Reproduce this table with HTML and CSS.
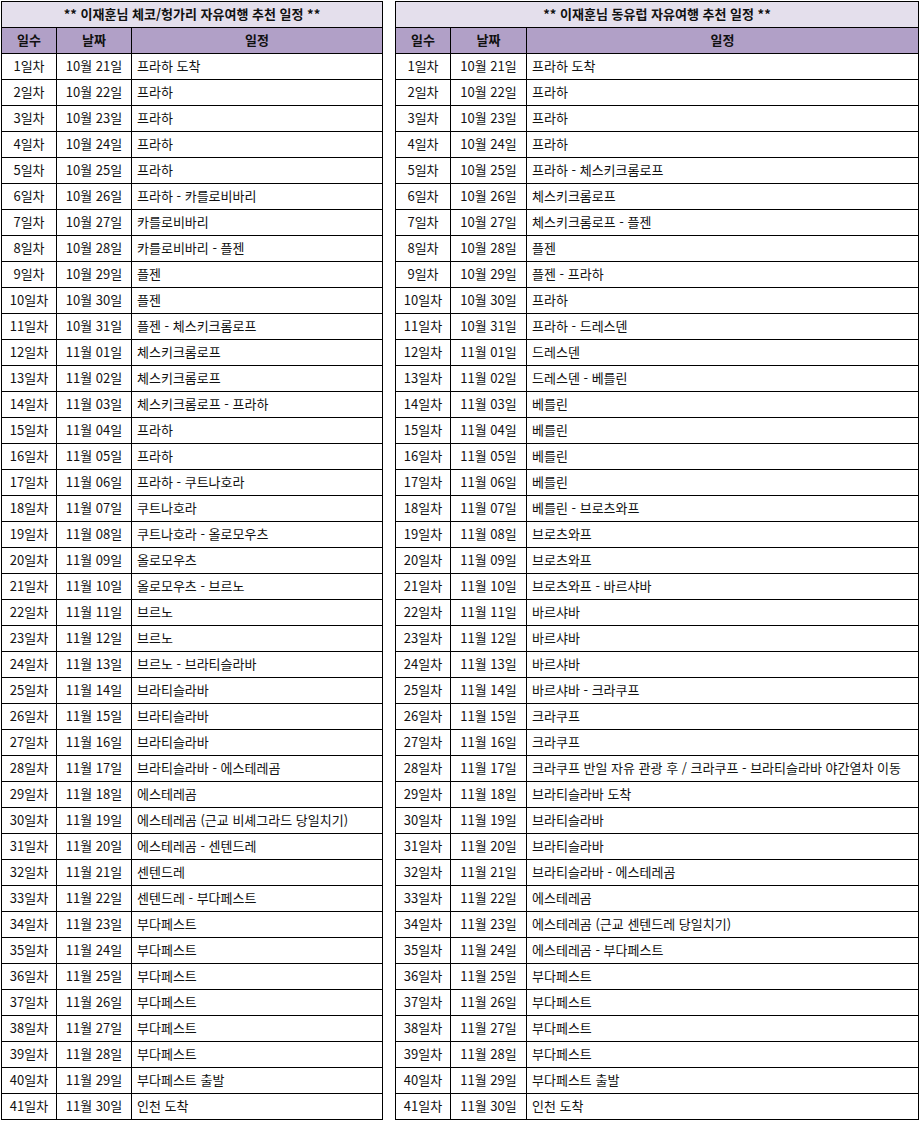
FILE: index.html
```html
<!DOCTYPE html>
<html lang="ko">
<head>
<meta charset="utf-8">
<link rel="stylesheet" href="styles.css">
</head>
<body>
<div class="wrap">
<table class="sched left">
<colgroup><col class="c-day"><col class="c-date-l"><col></colgroup>
<thead>
<tr class="title"><th colspan="3">** 이재훈님 체코/헝가리 자유여행 추천 일정 **</th></tr>
<tr class="head"><th>일수</th><th>날짜</th><th>일정</th></tr>
</thead>
<tbody>
<tr><td>1일차</td><td>10월 21일</td><td>프라하 도착</td></tr>
<tr><td>2일차</td><td>10월 22일</td><td>프라하</td></tr>
<tr><td>3일차</td><td>10월 23일</td><td>프라하</td></tr>
<tr><td>4일차</td><td>10월 24일</td><td>프라하</td></tr>
<tr><td>5일차</td><td>10월 25일</td><td>프라하</td></tr>
<tr><td>6일차</td><td>10월 26일</td><td>프라하 - 카를로비바리</td></tr>
<tr><td>7일차</td><td>10월 27일</td><td>카를로비바리</td></tr>
<tr><td>8일차</td><td>10월 28일</td><td>카를로비바리 - 플젠</td></tr>
<tr><td>9일차</td><td>10월 29일</td><td>플젠</td></tr>
<tr><td>10일차</td><td>10월 30일</td><td>플젠</td></tr>
<tr><td>11일차</td><td>10월 31일</td><td>플젠 - 체스키크롬로프</td></tr>
<tr><td>12일차</td><td>11월 01일</td><td>체스키크롬로프</td></tr>
<tr><td>13일차</td><td>11월 02일</td><td>체스키크롬로프</td></tr>
<tr><td>14일차</td><td>11월 03일</td><td>체스키크롬로프 - 프라하</td></tr>
<tr><td>15일차</td><td>11월 04일</td><td>프라하</td></tr>
<tr><td>16일차</td><td>11월 05일</td><td>프라하</td></tr>
<tr><td>17일차</td><td>11월 06일</td><td>프라하 - 쿠트나호라</td></tr>
<tr><td>18일차</td><td>11월 07일</td><td>쿠트나호라</td></tr>
<tr><td>19일차</td><td>11월 08일</td><td>쿠트나호라 - 올로모우츠</td></tr>
<tr><td>20일차</td><td>11월 09일</td><td>올로모우츠</td></tr>
<tr><td>21일차</td><td>11월 10일</td><td>올로모우츠 - 브르노</td></tr>
<tr><td>22일차</td><td>11월 11일</td><td>브르노</td></tr>
<tr><td>23일차</td><td>11월 12일</td><td>브르노</td></tr>
<tr><td>24일차</td><td>11월 13일</td><td>브르노 - 브라티슬라바</td></tr>
<tr><td>25일차</td><td>11월 14일</td><td>브라티슬라바</td></tr>
<tr><td>26일차</td><td>11월 15일</td><td>브라티슬라바</td></tr>
<tr><td>27일차</td><td>11월 16일</td><td>브라티슬라바</td></tr>
<tr><td>28일차</td><td>11월 17일</td><td>브라티슬라바 - 에스테레곰</td></tr>
<tr><td>29일차</td><td>11월 18일</td><td>에스테레곰</td></tr>
<tr><td>30일차</td><td>11월 19일</td><td>에스테레곰 (근교 비셰그라드 당일치기)</td></tr>
<tr><td>31일차</td><td>11월 20일</td><td>에스테레곰 - 센텐드레</td></tr>
<tr><td>32일차</td><td>11월 21일</td><td>센텐드레</td></tr>
<tr><td>33일차</td><td>11월 22일</td><td>센텐드레 - 부다페스트</td></tr>
<tr><td>34일차</td><td>11월 23일</td><td>부다페스트</td></tr>
<tr><td>35일차</td><td>11월 24일</td><td>부다페스트</td></tr>
<tr><td>36일차</td><td>11월 25일</td><td>부다페스트</td></tr>
<tr><td>37일차</td><td>11월 26일</td><td>부다페스트</td></tr>
<tr><td>38일차</td><td>11월 27일</td><td>부다페스트</td></tr>
<tr><td>39일차</td><td>11월 28일</td><td>부다페스트</td></tr>
<tr><td>40일차</td><td>11월 29일</td><td>부다페스트 출발</td></tr>
<tr><td>41일차</td><td>11월 30일</td><td>인천 도착</td></tr>
</tbody>
</table>
<table class="sched right">
<colgroup><col class="c-day"><col class="c-date-r"><col></colgroup>
<thead>
<tr class="title"><th colspan="3">** 이재훈님 동유럽 자유여행 추천 일정 **</th></tr>
<tr class="head"><th>일수</th><th>날짜</th><th>일정</th></tr>
</thead>
<tbody>
<tr><td>1일차</td><td>10월 21일</td><td>프라하 도착</td></tr>
<tr><td>2일차</td><td>10월 22일</td><td>프라하</td></tr>
<tr><td>3일차</td><td>10월 23일</td><td>프라하</td></tr>
<tr><td>4일차</td><td>10월 24일</td><td>프라하</td></tr>
<tr><td>5일차</td><td>10월 25일</td><td>프라하 - 체스키크롬로프</td></tr>
<tr><td>6일차</td><td>10월 26일</td><td>체스키크롬로프</td></tr>
<tr><td>7일차</td><td>10월 27일</td><td>체스키크롬로프 - 플젠</td></tr>
<tr><td>8일차</td><td>10월 28일</td><td>플젠</td></tr>
<tr><td>9일차</td><td>10월 29일</td><td>플젠 - 프라하</td></tr>
<tr><td>10일차</td><td>10월 30일</td><td>프라하</td></tr>
<tr><td>11일차</td><td>10월 31일</td><td>프라하 - 드레스덴</td></tr>
<tr><td>12일차</td><td>11월 01일</td><td>드레스덴</td></tr>
<tr><td>13일차</td><td>11월 02일</td><td>드레스덴 - 베를린</td></tr>
<tr><td>14일차</td><td>11월 03일</td><td>베를린</td></tr>
<tr><td>15일차</td><td>11월 04일</td><td>베를린</td></tr>
<tr><td>16일차</td><td>11월 05일</td><td>베를린</td></tr>
<tr><td>17일차</td><td>11월 06일</td><td>베를린</td></tr>
<tr><td>18일차</td><td>11월 07일</td><td>베를린 - 브로츠와프</td></tr>
<tr><td>19일차</td><td>11월 08일</td><td>브로츠와프</td></tr>
<tr><td>20일차</td><td>11월 09일</td><td>브로츠와프</td></tr>
<tr><td>21일차</td><td>11월 10일</td><td>브로츠와프 - 바르샤바</td></tr>
<tr><td>22일차</td><td>11월 11일</td><td>바르샤바</td></tr>
<tr><td>23일차</td><td>11월 12일</td><td>바르샤바</td></tr>
<tr><td>24일차</td><td>11월 13일</td><td>바르샤바</td></tr>
<tr><td>25일차</td><td>11월 14일</td><td>바르샤바 - 크라쿠프</td></tr>
<tr><td>26일차</td><td>11월 15일</td><td>크라쿠프</td></tr>
<tr><td>27일차</td><td>11월 16일</td><td>크라쿠프</td></tr>
<tr><td>28일차</td><td>11월 17일</td><td>크라쿠프 반일 자유 관광 후 / 크라쿠프 - 브라티슬라바 야간열차 이동</td></tr>
<tr><td>29일차</td><td>11월 18일</td><td>브라티슬라바 도착</td></tr>
<tr><td>30일차</td><td>11월 19일</td><td>브라티슬라바</td></tr>
<tr><td>31일차</td><td>11월 20일</td><td>브라티슬라바</td></tr>
<tr><td>32일차</td><td>11월 21일</td><td>브라티슬라바 - 에스테레곰</td></tr>
<tr><td>33일차</td><td>11월 22일</td><td>에스테레곰</td></tr>
<tr><td>34일차</td><td>11월 23일</td><td>에스테레곰 (근교 센텐드레 당일치기)</td></tr>
<tr><td>35일차</td><td>11월 24일</td><td>에스테레곰 - 부다페스트</td></tr>
<tr><td>36일차</td><td>11월 25일</td><td>부다페스트</td></tr>
<tr><td>37일차</td><td>11월 26일</td><td>부다페스트</td></tr>
<tr><td>38일차</td><td>11월 27일</td><td>부다페스트</td></tr>
<tr><td>39일차</td><td>11월 28일</td><td>부다페스트</td></tr>
<tr><td>40일차</td><td>11월 29일</td><td>부다페스트 출발</td></tr>
<tr><td>41일차</td><td>11월 30일</td><td>인천 도착</td></tr>
</tbody>
</table>
</div>
</body>
</html>
```
FILE: styles.css
```css
html, body {
  margin: 0;
  padding: 0;
  background: #ffffff;
}
body {
  font-family: "Noto Sans CJK KR", "Noto Sans", sans-serif;
  font-size: 13px;
  color: #111111;
}
.wrap {
  display: flex;
  align-items: flex-start;
  gap: 12px;
  padding: 1px 0 0 1px;
}
.sched {
  border-collapse: collapse;
  table-layout: fixed;
}
.sched.left { width: 382px; }
.sched.right { width: 524px; }
.c-day { width: 55px; }
.c-date-l { width: 75px; }
.c-date-r { width: 76px; }
.sched th, .sched td {
  border: 1px solid #000000;
  height: 24px;
  padding: 0 0 1px 0;
  line-height: 16px;
  white-space: nowrap;
  overflow: hidden;
}
.sched td {
  text-align: center;
  font-weight: normal;
}
.sched td:nth-child(3) {
  text-align: left;
  padding-left: 5px;
}
.title th {
  background: #e4dfec;
  font-weight: bold;
  text-align: center;
}
.head th {
  background: #b1a0c7;
  font-weight: bold;
  text-align: center;
}
```
